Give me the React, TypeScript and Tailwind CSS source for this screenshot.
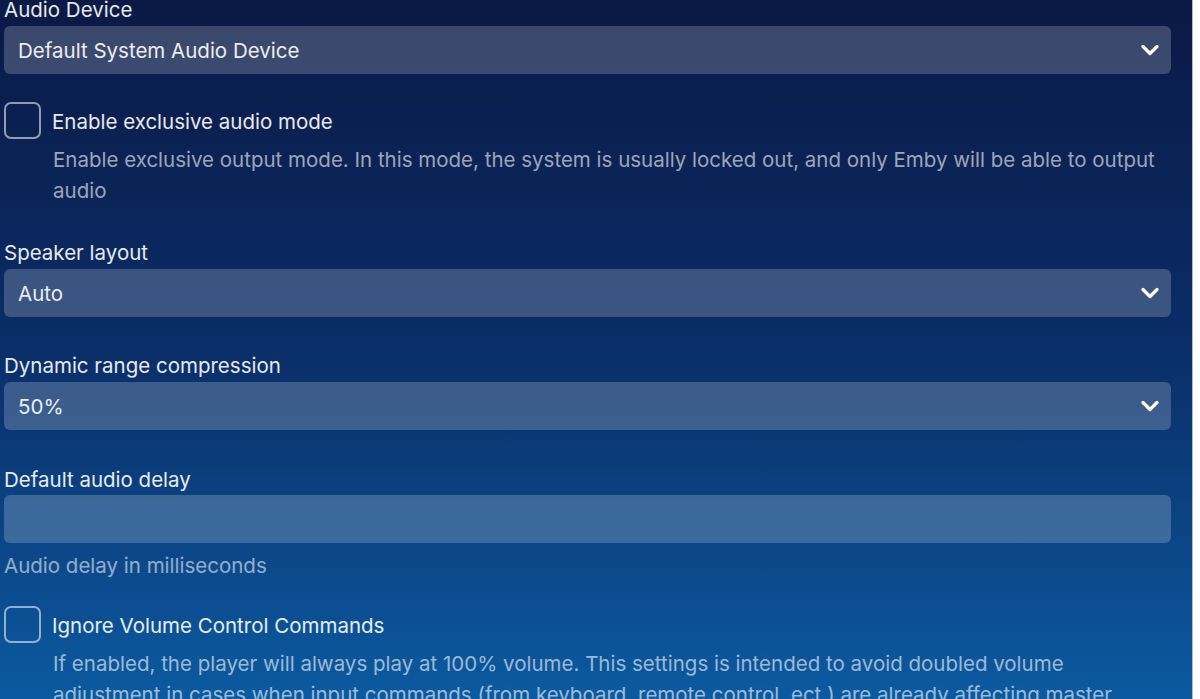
import React, { FC } from 'react'
import { ChevronDown } from 'lucide-react'

const FONT = "font-['Inter','Noto_Sans',sans-serif]"

const SelectBox: FC<{ value: string }> = ({ value }) => (
  <div className="flex h-[48px] items-center justify-between rounded-[6px] bg-white/20 pl-[14px] pr-[7px] text-white/90">
    <span className="pt-[2px]">{value}</span>
    <ChevronDown size={28} strokeWidth={2.8} className="text-white" />
  </div>
)

const Label: FC<{ children: React.ReactNode }> = ({ children }) => (
  <div className="h-[24px] pt-[2px] leading-[24px] text-white/90">{children}</div>
)

const CheckRow: FC<{ title: string; desc: string }> = ({ title, desc }) => (
  <div>
    <div className="flex items-center">
      <div className="h-[37px] w-[37px] shrink-0 rounded-[7px] border-2 border-white/55" />
      <span className="ml-[11px] mt-[4px] text-white/90">{title}</span>
    </div>
    <p className="mt-[5px] pl-[49px] leading-[31px] text-white/60">{desc}</p>
  </div>
)

export default function App() {
  return (
    <div className={`flex h-[699px] w-[1200px] overflow-hidden bg-white ${FONT}`}>
      <div className="h-full w-[1193px] shrink-0 overflow-hidden border-r border-[#a7bad6] bg-gradient-to-b from-[#0a1945] via-[#0a2e68] to-[#0b5aa0] text-[20.5px]">
        <div className="-mt-[4px] pl-[4px] pr-[21px]">
          <Label>Audio Device</Label>
          <div className="mt-[6px]">
            <SelectBox value="Default System Audio Device" />
          </div>

          <div className="mt-[28px]">
            <CheckRow
              title="Enable exclusive audio mode"
              desc="Enable exclusive output mode. In this mode, the system is usually locked out, and only Emby will be able to output audio"
            />
          </div>

          <div className="mt-[33px]">
            <Label>Speaker layout</Label>
            <div className="mt-[6px]">
              <SelectBox value="Auto" />
            </div>
          </div>

          <div className="mt-[35px]">
            <Label>Dynamic range compression</Label>
            <div className="mt-[6px]">
              <SelectBox value="50%" />
            </div>
          </div>

          <div className="mt-[36px]">
            <Label>Default audio delay</Label>
            <input
              type="text"
              className="mt-[5px] block h-[48px] w-full rounded-[6px] bg-white/20 px-[14px] text-white/90 outline-none"
            />
            <div className="mt-[9px] h-[24px] pt-[2px] leading-[24px] text-white/55">
              Audio delay in milliseconds
            </div>
          </div>

          <div className="mt-[30px]">
            <CheckRow
              title="Ignore Volume Control Commands"
              desc="If enabled, the player will always play at 100% volume. This settings is intended to avoid doubled volume adjustment in cases when input commands (from keyboard, remote control, ect.) are already affecting master volume."
            />
          </div>
        </div>
      </div>
    </div>
  )
}
